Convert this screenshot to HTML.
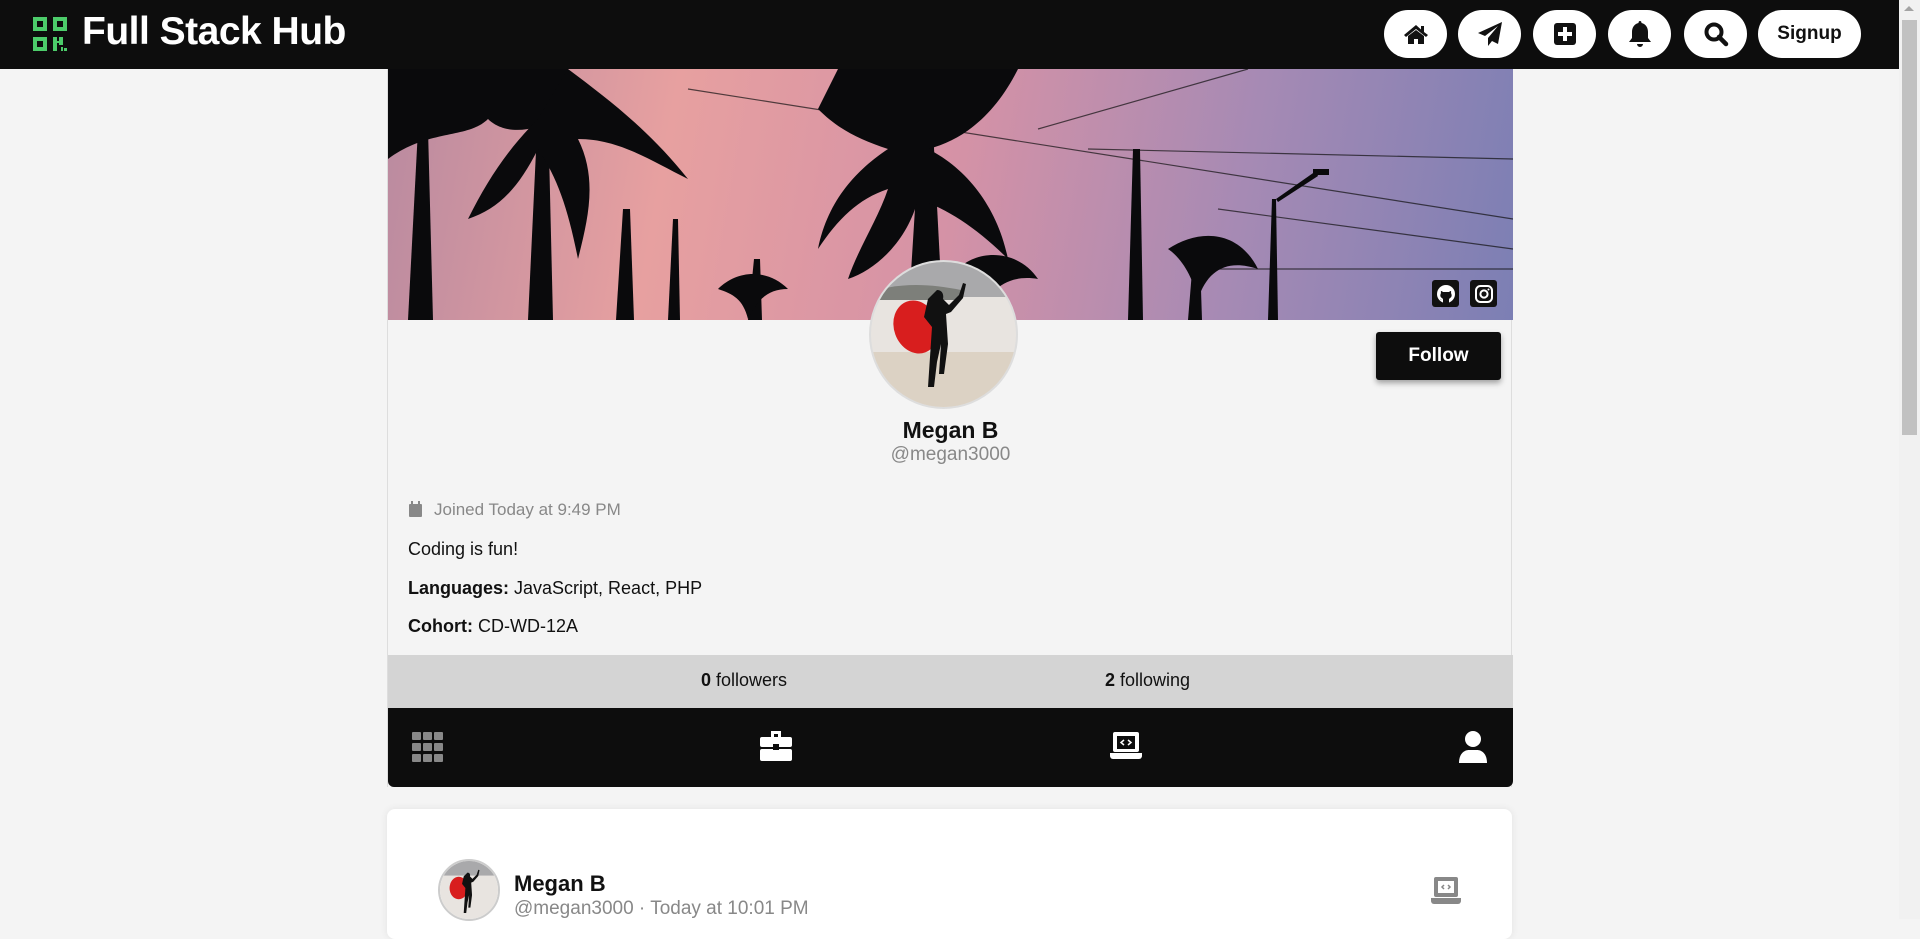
<!DOCTYPE html>
<html><head><meta charset="utf-8"><style>
*{box-sizing:border-box;margin:0;padding:0}
html,body{width:1920px;height:919px;overflow:hidden;background:#f4f4f4;font-family:"Liberation Sans",sans-serif}
.hdr{position:absolute;left:0;top:0;width:1899px;height:69px;background:#0d0d0d}
.logo{position:absolute;left:82px;top:10px;color:#fff;font-size:39px;font-weight:bold;letter-spacing:-0.5px}
.nb{position:absolute;top:10px;width:63px;height:48px;border-radius:24px;background:#fff;display:flex;align-items:center;justify-content:center}
.sb{position:absolute;right:0;top:0;width:21px;height:919px;background:#f1f1f1}
.card{position:absolute;left:387px;top:69px;width:1125px;height:718px;background:#f4f4f4;border-left:1px solid #ddd;border-right:1px solid #ddd}
.cover{position:absolute;left:0;top:0;width:1125px;height:251px;overflow:hidden;background:linear-gradient(100deg,#b98aa0 0%,#e7a0a0 25%,#d592a6 50%,#a68ab4 75%,#7c7fb4 100%)}
.av{position:absolute;left:481px;top:191px;width:149px;height:149px;border-radius:50%;border:2px solid #ddd;overflow:hidden;background:#ddd}
.fol{position:absolute;left:988px;top:263px;width:125px;height:48px;background:#0d0d0d;color:#fff;font-weight:bold;font-size:19px;border-radius:3px;display:flex;align-items:center;justify-content:center;box-shadow:0 3px 6px rgba(0,0,0,.35)}
.nm{position:absolute;left:0;width:1125px;text-align:center}
.t{position:absolute;left:20px;font-size:18px;color:#111}
.stats{position:absolute;left:0;top:586px;width:1125px;height:53px;background:#d4d4d4;font-size:18px;color:#111}
.bar{position:absolute;left:0;top:639px;width:1125px;height:79px;background:#0d0d0d;border-radius:0 0 6px 6px}
.c2{position:absolute;left:387px;top:809px;width:1125px;height:130px;background:#fff;border-radius:8px;box-shadow:0 0 8px rgba(0,0,0,.08)}
</style></head><body>
<div class="hdr">
<svg style="position:absolute;left:33px;top:17px" width="34" height="34" viewBox="0 0 34 34" fill="#4ccc6a"><path d="M0 0h14v14H0zM4 4v6h6V4zM20 0h14v14H20zM24 4v6h6V4zM0 20h14v14H0zM4 24v6h6v-6zM20 20h4v4h2v-4h4v8h-4v-2h-2v8h-4zM28 30h2v4h-2zM31 31h3v3h-3z" fill-rule="evenodd"/></svg>
<div class="logo">Full Stack Hub</div>
<div class="nb" style="left:1384px"><svg width="26" height="22" viewBox="0 0 26 22"><path d="M13 2 1 12l2 2 10-8 10 8 2-2-4-3V3h-3v3.5z" fill="#111"/><path d="M5 13v8h6v-5h4v5h6v-8l-8-6z" fill="#111"/></svg></div>
<div class="nb" style="left:1458px"><svg width="26" height="26" viewBox="0 0 26 26"><path d="M25 1 1 12l7 3 13-10-10 12v8l4-5 6 3z" fill="#111"/></svg></div>
<div class="nb" style="left:1533px"><svg width="24" height="24" viewBox="0 0 24 24"><rect x="1" y="1" width="22" height="22" rx="3" fill="#111"/><path d="M10 5h4v5h5v4h-5v5h-4v-5H5v-4h5z" fill="#fff"/></svg></div>
<div class="nb" style="left:1608px"><svg width="24" height="28" viewBox="0 0 24 28"><path d="M12 1c1 0 1.5.8 1.5 2C18 4 20 8 20 12v6l3 4H1l3-4v-6c0-4 2-8 6.5-9C10.5 1.8 11 1 12 1zM9 24h6a3 3 0 0 1-6 0z" fill="#111"/></svg></div>
<div class="nb" style="left:1684px"><svg width="26" height="26" viewBox="0 0 26 26"><circle cx="11" cy="11" r="7.5" fill="none" stroke="#111" stroke-width="4"/><path d="M16 16l7 7" stroke="#111" stroke-width="4.5" stroke-linecap="round"/></svg></div>
<div class="nb" style="left:1758px;width:103px;font-weight:bold;font-size:19px;color:#111">Signup</div>
</div>
<div class="sb"><div style="position:absolute;left:5px;top:6px;width:0;height:0;border-left:5px solid transparent;border-right:5px solid transparent;border-bottom:5px solid #a3a3a3"></div><div style="position:absolute;left:3px;top:20px;width:15px;height:415px;background:#c1c1c1"></div></div>

<div class="card">
<div class="cover">
<svg width="1125" height="251" viewBox="0 0 1125 251">
<g stroke="#111" stroke-width="1.2" fill="none" opacity=".7"><path d="M300 20 L1125 150"/><path d="M650 60 L860 0"/><path d="M700 80 L1125 90"/><path d="M830 140 L1125 180"/><path d="M820 200 L1125 200"/></g>
<g fill="#0a0a0c">
<path d="M20 251 L30 60 L40 60 L45 251z"/><path d="M0 0h180v40c-20 20-60 30-80 10-20 20-60 10-100 40z"/>
<path d="M140 251 L150 40 L160 40 L165 251z"/><path d="M180 0c40 30 80 60 120 110-40-20-70-40-110-40 20 40 10 80 0 120-10-50-20-80-40-110-20 40-40 60-70 70 20-40 40-70 70-100z"/>
<path d="M228 251 L235 140 L242 140 L246 251z"/>
<path d="M280 251 L285 150 L290 150 L292 251z"/>
<path d="M360 251 L366 190 L372 190 L374 251z"/><path d="M330 220c20-20 50-20 70 0-20 0-30 10-40 30-5-20-15-25-30-30z"/>
<path d="M520 251 L532 60 L545 60 L555 251z"/><path d="M450 0h180c-20 40-50 70-90 80 40 20 70 60 80 110-30-30-60-50-90-60-10 40-40 70-70 80 10-30 30-60 40-90-30 10-50 30-70 60 10-50 40-80 70-100-30-10-50-20-70-40z"/>
<path d="M600 251 L605 190 L610 190 L612 251z"/><path d="M570 200c20-20 60-20 80 10-30-5-50 10-60 40 0-20-10-40-20-50z"/>
<path d="M740 251 L745 80 L752 80 L755 251z"/>
<path d="M800 251 L805 190 L812 190 L814 251z"/><path d="M780 180c30-20 70-20 90 20-30-10-50 0-60 30-5-20-15-40-30-50z"/>
<path d="M880 251 L884 130 L888 130 L890 251z"/><path d="M888 130l40-28 2 5-40 26z"/><path d="M925 100h16v6h-16z"/>
</g>
</svg>
<div style="position:absolute;left:1044px;top:211px;width:27px;height:27px;background:#111;border-radius:3px;display:flex;align-items:center;justify-content:center"><svg width="20" height="20" viewBox="0 0 20 20"><circle cx="10" cy="10" r="9" fill="#fff"/><path d="M7 19v-3c-2 0-3-1-3-1 1 0 1 1 3 1 0-1 0-1-1-2-2-1-2-3-1-5-.3-1 0-2 0-2 1 0 2 1 2 1h6s1-1 2-1c0 0 .3 1 0 2 1 2 1 4-1 5-1 1-1 1-1 2v3z" fill="#111"/></svg></div>
<div style="position:absolute;left:1082px;top:211px;width:27px;height:27px;background:#111;border-radius:3px;display:flex;align-items:center;justify-content:center"><svg width="20" height="20" viewBox="0 0 20 20"><rect x="2" y="2" width="16" height="16" rx="4.5" fill="none" stroke="#fff" stroke-width="2"/><circle cx="10" cy="10" r="3.6" fill="none" stroke="#fff" stroke-width="2"/><circle cx="14.5" cy="5.5" r="1" fill="#fff"/></svg></div>
</div>
<div class="av"><svg width="149" height="149" viewBox="0 0 149 149"><rect width="149" height="149" fill="#e8e4e0"/><rect width="149" height="35" fill="#a9a9ab"/><path d="M0 30c30-10 60-8 90-2v10H0z" fill="#7d7f7a"/><path d="M0 90h149v59H0z" fill="#dcd2c4"/><ellipse cx="45" cy="65" rx="22" ry="27" fill="#d81e1e" transform="rotate(-20 45 65)"/><path d="M66 28c5 0 7 4 6 9l6 6 10-10 4-12 3 1-3 14-12 14-5 2 2 30-4 30h-5l2-30-4 18-3 25h-6l2-30 2-30-8-10 4-18z" fill="#111"/></svg></div>
<div class="fol">Follow</div>
<div class="nm" style="top:348px;font-size:23px;font-weight:bold;color:#111">Megan B</div>
<div class="nm" style="top:375px;font-size:19px;color:#888">@megan3000</div>
<svg style="position:absolute;left:21px;top:432px" width="13" height="16" viewBox="0 0 13 16"><rect x="0" y="3" width="13" height="13" rx="1" fill="#888"/><rect x="2" y="0" width="2" height="4" fill="#888"/><rect x="9" y="0" width="2" height="4" fill="#888"/></svg>
<div class="t" style="left:46px;top:431px;font-size:17px;color:#888">Joined Today at 9:49 PM</div>
<div class="t" style="top:470px">Coding is fun!</div>
<div class="t" style="top:509px"><b>Languages:</b> JavaScript, React, PHP</div>
<div class="t" style="top:547px"><b>Cohort:</b> CD-WD-12A</div>
<div class="stats"><span style="position:absolute;left:313px;top:15px"><b>0</b> followers</span><span style="position:absolute;left:717px;top:15px"><b>2</b> following</span></div>
<div class="bar">
<svg style="position:absolute;left:24px;top:24px" width="32" height="30" viewBox="0 0 32 30" fill="#888"><rect x="0" y="0" width="9" height="8" rx="1"/><rect x="11" y="0" width="9" height="8" rx="1"/><rect x="22" y="0" width="9" height="8" rx="1"/><rect x="0" y="11" width="9" height="8" rx="1"/><rect x="11" y="11" width="9" height="8" rx="1"/><rect x="22" y="11" width="9" height="8" rx="1"/><rect x="0" y="22" width="9" height="8" rx="1"/><rect x="11" y="22" width="9" height="8" rx="1"/><rect x="22" y="22" width="9" height="8" rx="1"/></svg>
<svg style="position:absolute;left:372px;top:23px" width="32" height="30" viewBox="0 0 32 30" fill="#fff"><path d="M11 0h10v6h-3V3h-4v3h-3z"/><rect x="0" y="6" width="32" height="10" rx="2"/><rect x="0" y="18" width="32" height="12" rx="2"/><rect x="13" y="13" width="6" height="6" fill="#0d0d0d"/></svg>
<svg style="position:absolute;left:722px;top:24px" width="32" height="28" viewBox="0 0 32 28"><rect x="3" y="0" width="26" height="20" rx="2" fill="#fff"/><rect x="7" y="4" width="18" height="13" fill="#0d0d0d"/><path d="M14 8l-3 2.5 3 2.5M18 8l3 2.5-3 2.5" stroke="#fff" stroke-width="1.5" fill="none"/><path d="M0 21h32v3a3 3 0 0 1-3 3H3a3 3 0 0 1-3-3z" fill="#fff"/></svg>
<svg style="position:absolute;left:1069px;top:23px" width="32" height="32" viewBox="0 0 32 32" fill="#fff"><circle cx="16" cy="8" r="8"/><path d="M2 32c0-9 5-13 10-13h8c5 0 10 4 10 13z"/></svg>
</div>
</div>

<div class="c2">
<div style="position:absolute;left:51px;top:50px;width:62px;height:62px;border-radius:50%;border:2px solid #ccc;overflow:hidden"><svg width="62" height="62" viewBox="0 0 149 149"><rect width="149" height="149" fill="#e8e4e0"/><rect width="149" height="35" fill="#a9a9ab"/><ellipse cx="45" cy="65" rx="22" ry="27" fill="#d81e1e"/><path d="M66 28c5 0 7 4 6 9l6 6 10-10 4-12 3 1-3 14-12 14-5 2 2 30-4 30h-5l2-30-4 18-3 25h-6l2-30 2-30-8-10 4-18z" fill="#111"/></svg></div>
<div style="position:absolute;left:127px;top:62px;font-size:22px;font-weight:bold;color:#111">Megan B</div>
<div style="position:absolute;left:127px;top:89px;font-size:19px;color:#888">@megan3000 · Today at 10:01 PM</div>
<svg style="position:absolute;left:1043px;top:68px" width="32" height="28" viewBox="0 0 32 28"><rect x="4" y="0" width="24" height="20" rx="2" fill="#888"/><rect x="8" y="4" width="16" height="12" fill="#fff"/><path d="M14 8l-2 2 2 2M18 8l2 2-2 2" stroke="#888" stroke-width="1.5" fill="none"/><path d="M1 21h30v3a3 3 0 0 1-3 3H4a3 3 0 0 1-3-3z" fill="#888"/></svg>
</div>
</body></html>
